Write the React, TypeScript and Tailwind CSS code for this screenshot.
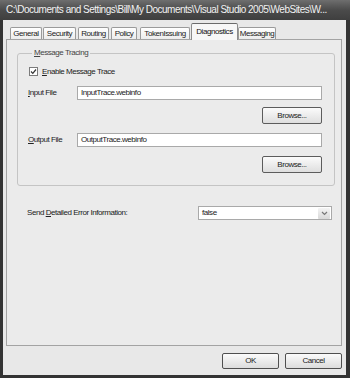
import React from "react";

const tabs = [
  { label: "General", cls: "ml-[4px] w-[32px]" },
  { label: "Security", cls: "ml-[1px] w-[33px]" },
  { label: "Routing", cls: "ml-[2px] w-[31px]" },
  { label: "Policy", cls: "ml-[2px] w-[26px]" },
  { label: "TokenIssuing", cls: "ml-[3px] w-[50px]" },
  { label: "Diagnostics", cls: "ml-[1px] w-[47px]", active: true },
  { label: "Messaging", cls: "ml-[0px] w-[38px]" },
];

function Mn({ children }: { children: React.ReactNode }) {
  return <span className="underline underline-offset-[1px]">{children}</span>;
}

function Browse() {
  return (
    <div className="flex justify-end">
      <button className="h-[17px] w-[60px] rounded-[2px] border border-[#5c5c5c] bg-gradient-to-b from-[#fbfbfb] to-[#dedede] text-[8px] leading-none tracking-[-0.45px] text-[#222]">
        Browse...
      </button>
    </div>
  );
}

function FileRow({ label, mn, value }: { label: string; mn: string; value: string }) {
  return (
    <div className="flex h-[14px] items-center">
      <div className="w-[49px] text-[8px] leading-none tracking-[-0.45px] text-[#222]">
        <Mn>{mn}</Mn>
        {label}
      </div>
      <div className="flex h-[14px] flex-1 items-center border border-[#a9a9a9] bg-white pl-[3px] text-[8px] leading-none tracking-[-0.45px] text-[#222]">
        {value}
      </div>
    </div>
  );
}

export default function App() {
  return (
    <div className="flex h-[378px] w-[350px] flex-col bg-[#333333] font-['Liberation_Sans',Arial,sans-serif]">
      {/* title bar */}
      <div className="flex h-[20px] items-center overflow-hidden whitespace-nowrap bg-gradient-to-b from-[#6e6e6e] via-[#4b4b4b] to-[#3f3f3f] pl-[6px] text-[10px] leading-none tracking-[-0.5px] text-[#f2f2f2]">
        C:\Documents and Settings\Bill\My Documents\Visual Studio 2005\WebSites\W...
      </div>

      {/* body */}
      <div className="mb-[3px] ml-[3px] mr-[4px] flex flex-1 flex-col bg-[#e8e8e8] pl-[3px] pr-[4px] pb-[6px] pt-[3px]">
        {/* tabs */}
        <div className="flex h-[16px] items-end">
          {tabs.map((t) =>
            t.active ? (
              <div
                key={t.label}
                className={`${t.cls} relative z-10 -mb-px flex h-[17px] items-center justify-center rounded-t-[2px] border border-b-0 border-[#8c8c8c] border-t-[#6a6a6a] bg-[#f7f7f7] text-[8px] leading-none tracking-[-0.45px] text-[#111]`}
              >
                {t.label}
              </div>
            ) : (
              <div
                key={t.label}
                className={`${t.cls} flex h-[12px] items-center justify-center rounded-t-[2px] border border-b-0 border-[#9a9a9a] bg-gradient-to-b from-[#ffffff] to-[#ececec] text-[8px] leading-none tracking-[-0.45px] text-[#222]`}
              >
                {t.label}
              </div>
            )
          )}
        </div>

        {/* tab page */}
        <div className="flex flex-1 flex-col border border-[#a3a3a3] bg-[#ebebeb]">
          <fieldset className="ml-[10px] mr-[6px] mt-[8px] rounded-[3px] border border-[#c4c4c4] pb-[12px] pl-[10px] pr-[12px]">
            <legend className="ml-[4px] px-[2px] text-[8px] leading-[10px] tracking-[-0.45px] text-[#444]">
              <Mn>M</Mn>essage Tracing
            </legend>

            <div className="mt-[9px] flex h-[9px] items-center">
              <div className="ml-[1px] flex h-[9px] w-[9px] items-center justify-center border border-[#7b7b7b] bg-white">
                <svg width="7" height="7" viewBox="0 0 7 7">
                  <path d="M1 3.5 L2.8 5.3 L6 1.5" fill="none" stroke="#333" strokeWidth="1.2" />
                </svg>
              </div>
              <span className="ml-[4px] text-[8px] leading-none tracking-[-0.45px] text-[#222]">
                <Mn>E</Mn>nable Message Trace
              </span>
            </div>

            <div className="mt-[10px]">
              <FileRow mn="I" label="nput File" value="InputTrace.webinfo" />
            </div>
            <div className="mt-[7px]">
              <Browse />
            </div>
            <div className="mt-[9px]">
              <FileRow mn="O" label="utput File" value="OutputTrace.webinfo" />
            </div>
            <div className="mt-[9px]">
              <Browse />
            </div>
          </fieldset>

          <div className="mt-[20px] flex items-center pl-[20px] pr-[9px]">
            <span className="text-[8px] leading-none tracking-[-0.45px] text-[#222]">
              Send <Mn>D</Mn>etailed Error Information:
            </span>
            <div className="ml-auto flex h-[14px] w-[134px] items-center border border-[#a9a9a9] bg-white">
              <span className="flex-1 pl-[3px] text-[8px] leading-none tracking-[-0.45px] text-[#222]">false</span>
              <div className="mr-px flex h-[11px] w-[12px] items-center justify-center rounded-[1px] bg-gradient-to-b from-[#f4f4f4] to-[#d8d8d8]">
                <svg width="7" height="5" viewBox="0 0 7 5">
                  <path d="M1 1 L3.5 3.5 L6 1" fill="none" stroke="#777" strokeWidth="1.2" />
                </svg>
              </div>
            </div>
          </div>
        </div>

        {/* dialog buttons */}
        <div className="mt-[7px] flex h-[16px] justify-end gap-[6px]">
          <button className="h-[16px] w-[57px] rounded-[2px] border border-[#4f4f4f] bg-gradient-to-b from-[#fbfbfb] to-[#dcdcdc] text-[8px] leading-none tracking-[-0.45px] text-[#222]">
            OK
          </button>
          <button className="h-[16px] w-[57px] rounded-[2px] border border-[#4f4f4f] bg-gradient-to-b from-[#fbfbfb] to-[#dcdcdc] text-[8px] leading-none tracking-[-0.45px] text-[#222]">
            Cancel
          </button>
        </div>
      </div>
    </div>
  );
}
